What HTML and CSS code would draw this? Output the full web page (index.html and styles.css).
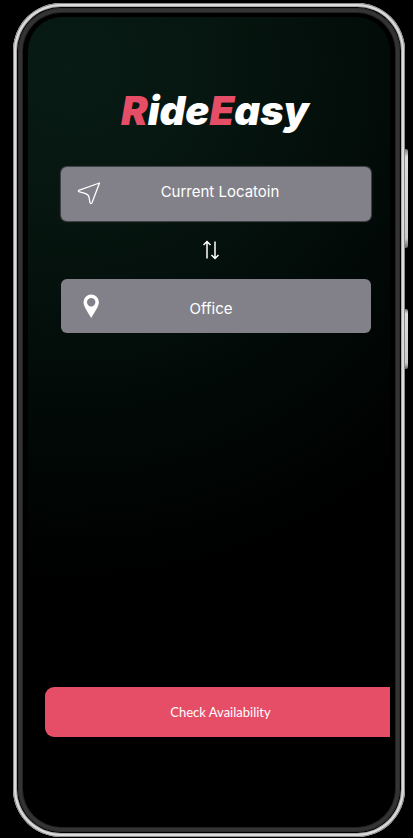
FILE: index.html
```html
<!DOCTYPE html>
<html lang="en">
<head>
<meta charset="utf-8">
<meta name="viewport" content="width=device-width, initial-scale=1">
<title>RideEasy</title>
<link rel="stylesheet" href="styles.css">
</head>
<body>
<div class="phone">
  <span class="side-key side-key-volume"></span>
  <span class="side-key side-key-power"></span>
  <div class="bezel">
    <main class="screen">
      <h1 class="brand"><span class="accent">R</span>ide<span class="accent">E</span>asy</h1>
      <form class="trip">
        <label class="field field-from">
          <svg class="icon" viewBox="0 0 26 26" aria-hidden="true"><path d="M22.500 3 1.700 10.400Q1 11 1.700 11.600L8 13.400Q11.700 14.600 12.100 17.500L13 22.800Q13.800 24.400 15 22.800Z" fill="none" stroke="#fff" stroke-width="1.3" stroke-linejoin="round"/></svg>
          <input class="place" type="text" value="Current Locatoin" aria-label="From">
        </label>
        <button class="swap" type="button" aria-label="Swap places">
          <svg class="swap-icon" viewBox="0 0 18 20" aria-hidden="true"><path d="M5 18.500V2M1.500 5 5 1.500 8.500 5M13 1.500V18M9.500 15 13 18.500 16.500 15" fill="none" stroke="#fff" stroke-width="1.500"/></svg>
        </button>
        <label class="field field-to">
          <svg class="icon" viewBox="0 0 26 26" aria-hidden="true"><path fill-rule="evenodd" d="M14.200 1.500a7.700 7.700 0 0 1 7.700 7.700c0 3.800-3.700 9-7.700 15.800-4-6.800-7.700-12-7.700-15.800a7.700 7.700 0 0 1 7.700-7.700Zm0 3.600a4.200 4.200 0 1 0 0 8.400 4.200 4.200 0 0 0 0-8.400Z" fill="#fff"/></svg>
          <input class="place" type="text" value="Office" aria-label="To">
        </label>
        <button class="check" type="submit">Check Availability</button>
      </form>
    </main>
  </div>
</div>
</body>
</html>
```
FILE: styles.css
```css
* {
  box-sizing: border-box;
}

body {
  margin: 0;
  min-height: 100vh;
  display: flex;
  padding: 3px 8px 1px 13px;
  background: #000;
  color: #fff;
  font-family: Inter, "Open Sans", sans-serif;
}

.phone {
  position: relative;
  flex: 1;
  min-width: 0;
  display: flex;
  padding: 5px;
  border-radius: 48px;
  background: #000;
  box-shadow: inset 0 0 0 1px #8c8c8c, inset 0 0 0 3px #dcdcdc, inset 0 0 0 4px #a8a8a8;
}

.side-key {
  position: absolute;
  left: 100%;
  width: 3px;
  border-radius: 0 2px 2px 0;
  background: linear-gradient(#777, #ddd 8%, #ccc 90%, #666);
}

.side-key-volume {
  top: 146px;
  height: 99px;
}

.side-key-power {
  top: 306px;
  height: 60px;
}

.bezel {
  flex: 1;
  min-width: 0;
  display: flex;
  padding: 9px 10px;
  border-radius: 43px;
  background: #000;
  box-shadow: inset 0 0 0 1px #2b2b2b, inset 0 0 0 4px #353434, inset 0 0 0 5px #222;
}

.screen {
  flex: 1;
  min-width: 0;
  display: flex;
  flex-direction: column;
  overflow: hidden;
  border-radius: 34px;
  background: radial-gradient(circle 520px at 12% 6%, #081b15 0%, #06150f 30%, #020b08 62%, #000 100%);
}

.brand {
  margin: 70px 0 0 12px;
  text-align: center;
  font-size: 40px;
  line-height: 48px;
  font-style: oblique 10deg;
  font-weight: 900;
}

.accent {
  color: #e64d67;
}

.trip {
  flex: 1;
  display: flex;
  flex-direction: column;
  margin-top: 32px;
}

.field {
  display: flex;
  height: 54px;
  margin: 0 19px 0 33px;
  padding: 0 16px;
  border-radius: 6px;
  background: #828189;
}

.field-from {
  padding-right: 34px;
  padding-bottom: 6px;
  box-shadow: 0 0 1px 1px #45464a;
}

.field-to {
  padding-right: 52px;
  padding-top: 4px;
}

.icon {
  flex: none;
  width: 26px;
  height: 26px;
  margin-top: 13px;
}

.field-to .icon {
  margin-top: 10px;
}

.place {
  flex: 1;
  min-width: 0;
  padding: 0;
  border: 0;
  background: transparent;
  color: #fff;
  text-align: center;
  font: 400 15px Inter, sans-serif;
}

.swap {
  align-self: center;
  display: flex;
  margin: 19px 0 19px 4px;
  padding: 0;
  border: 0;
  background: transparent;
}

.swap-icon {
  width: 18px;
  height: 20px;
}

.check {
  height: 50px;
  margin: auto 0 86px 17px;
  padding: 0 0 0 6px;
  border: 0;
  border-radius: 9px 0 0 9px;
  background: #e64d67;
  color: #fff;
  font: 400 13px Lato, sans-serif;
}
```
